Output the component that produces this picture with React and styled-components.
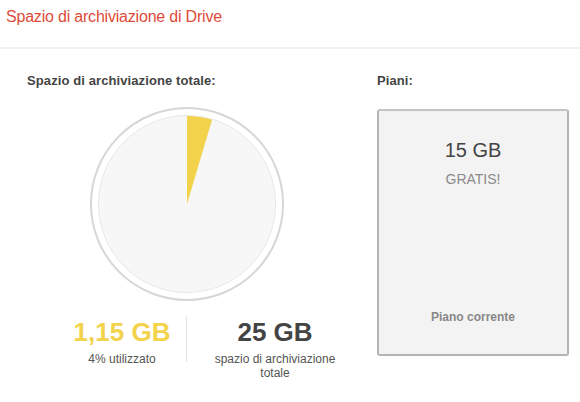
import React from "react";
import styled, { createGlobalStyle } from "styled-components";

const usedGb = 1.15;
const totalGb = 25;

const GlobalStyle = createGlobalStyle`
  body {
    margin: 0;
    background: #fff;
    font-family: "Liberation Sans", Arial, sans-serif;
  }
`;

function slicePath(fraction, r, c) {
  const angle = fraction * 2 * Math.PI;
  const x = c + r * Math.sin(angle);
  const y = c - r * Math.cos(angle);
  const large = fraction > 0.5 ? 1 : 0;
  return `M ${c} ${c} L ${c} ${c - r} A ${r} ${r} 0 ${large} 1 ${x} ${y} Z`;
}

function StoragePie() {
  return (
    <PieWrap>
      <svg width="196" height="196" viewBox="0 0 196 196">
        <circle cx="98" cy="98" r="96" fill="#fff" stroke="#d6d6d6" strokeWidth="2" />
        <circle cx="98" cy="98" r="88.5" fill="#f7f7f7" stroke="#e8e8e8" strokeWidth="1" />
        <path d={slicePath(usedGb / totalGb, 88, 98)} fill="#f2d34b" />
      </svg>
    </PieWrap>
  );
}

function App() {
  return (
    <>
      <GlobalStyle />
      <Header>
        <Title>Spazio di archiviazione di Drive</Title>
      </Header>
      <Content>
        <LeftColumn>
          <Label>Spazio di archiviazione totale:</Label>
          <StoragePie />
          <Stats>
            <Stat>
              <Amount $used>1,15 GB</Amount>
              <Caption>4% utilizzato</Caption>
            </Stat>
            <Divider />
            <Stat $right>
              <Amount>25 GB</Amount>
              <Caption>spazio di archiviazione totale</Caption>
            </Stat>
          </Stats>
        </LeftColumn>
        <RightColumn>
          <Label>Piani:</Label>
          <PlanCard>
            <PlanSize>15 GB</PlanSize>
            <PlanPrice>GRATIS!</PlanPrice>
            <PlanStatus>Piano corrente</PlanStatus>
          </PlanCard>
        </RightColumn>
      </Content>
    </>
  );
}

const Header = styled.header`
  height: 49px;
  padding: 5px 6px 0;
  box-sizing: border-box;
  border-bottom: 2px solid #f1f1f1;
`;

const Title = styled.h1`
  margin: 0;
  font-size: 16px;
  letter-spacing: -0.2px;
  font-weight: normal;
  line-height: 24px;
  color: #dd4b39;
`;

const Content = styled.main`
  display: flex;
  padding: 24px 0 0 27px;
`;

const LeftColumn = styled.section`
  width: 350px;
`;

const RightColumn = styled.section`
  width: 192px;
`;

const Label = styled.h2`
  margin: 0;
  font-size: 13px;
  letter-spacing: 0.1px;
  line-height: 16px;
  font-weight: bold;
  color: #444;
`;

const PieWrap = styled.div`
  margin: 17px 0 0 62px;
  width: 196px;
  height: 196px;
`;

const Stats = styled.div`
  display: flex;
  margin: 14px 0 0 31px;
`;

const Stat = styled.div`
  width: 128px;
  margin-left: ${(p) => (p.$right ? "24px" : "0")};
  text-align: center;
`;

const Divider = styled.div`
  width: 1px;
  height: 46px;
  background: #e4e4e4;
`;

const Amount = styled.div`
  font-size: 26px;
  line-height: 32px;
  font-weight: bold;
  color: ${(p) => (p.$used ? "#f2d34b" : "#444")};
`;

const Caption = styled.div`
  margin-top: 4px;
  font-size: 12px;
  line-height: 14px;
  color: #555;
`;

const PlanCard = styled.div`
  display: flex;
  flex-direction: column;
  align-items: center;
  box-sizing: border-box;
  width: 192px;
  height: 247px;
  margin-top: 20px;
  padding: 27px 0 0;
  background: #f3f3f3;
  border: 2px solid #b4b4b4;
  border-top-color: #c4c4c4;
  border-radius: 3px;
`;

const PlanSize = styled.div`
  font-size: 20px;
  line-height: 24px;
  color: #444;
`;

const PlanPrice = styled.div`
  margin-top: 9px;
  font-size: 14px;
  line-height: 16px;
  color: #8a8a8a;
`;

const PlanStatus = styled.div`
  margin-top: auto;
  margin-bottom: 30px;
  font-size: 12px;
  font-weight: bold;
  color: #888;
`;

export default App;
